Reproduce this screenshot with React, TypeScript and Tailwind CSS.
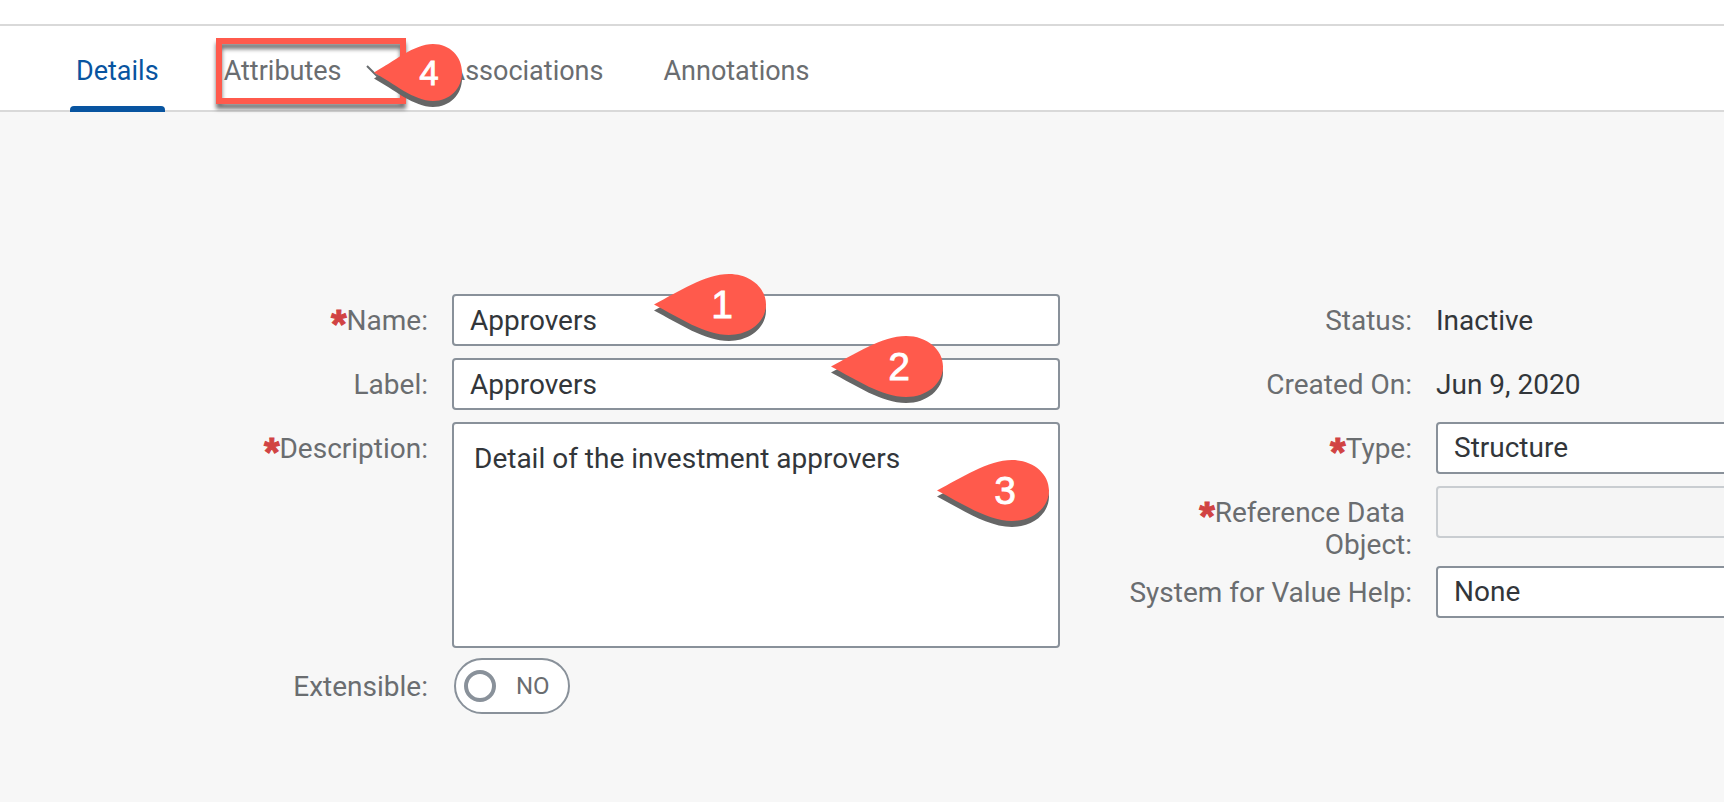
import type { ReactNode } from 'react';

const fieldClass =
  'block h-[52px] w-full appearance-none rounded-[4px] border-2 border-[#89919a] bg-white px-4 text-[28px] leading-8 text-[#32363a] outline-none';

function Pin({ n, place, small = false }: { n: number; place: string; small?: boolean }) {
  const drop = small
    ? 'M0 28.5C20 17.5 40 0 59 0C76 0 88 12.5 88 28.5C88 44.5 76 57 59 57C40 57 20 39.5 0 28.5Z'
    : 'M0 30.5C25 17.5 51 0 75 0C96 0 112 13.5 112 30.5C112 47.5 96 61 75 61C51 61 25 43.5 0 30.5Z';
  return (
    <svg
      className={`pointer-events-none absolute z-10 ${place}`}
      width={small ? 90 : 112}
      height={small ? 64 : 68}
      role="img"
      aria-label={`Step ${n}`}
    >
      <path d={drop} transform="translate(0 6)" fill="#666666" />
      <path d={drop} fill="#ff5a4c" />
      <text
        x={small ? 55 : 68}
        y={small ? 41 : 44}
        textAnchor="middle"
        fill="#ffffff"
        stroke="#ffffff"
        strokeWidth="0.8"
        fontFamily="'Liberation Sans', sans-serif"
        fontSize={small ? 35 : 39}
      >
        {n}
      </text>
    </svg>
  );
}

function Label({ htmlFor, required, children }: { htmlFor: string; required?: boolean; children: ReactNode }) {
  return (
    <label htmlFor={htmlFor} className="pt-[11px] pr-6 pb-[5px] text-right text-[#6a6d70]">
      {required && (
        <span className="inline-block h-8 align-top font-['Liberation_Sans'] text-[40px] leading-[38px] font-bold text-[#d14343] [-webkit-text-stroke:1px_#d14343]">*</span>
      )}
      {children}
    </label>
  );
}

export default function App() {
  return (
    <div className="min-h-screen overflow-hidden bg-[#f7f7f7] font-[Roboto,sans-serif] text-[28px] leading-8 text-[#32363a]">
      <header className="bg-white pt-6">
        <nav className="flex h-22 items-stretch border-y-2 border-[#d9d9d9] pl-[70px] text-[27px] text-[#6a6d70]">
          <a href="#details" aria-current="page" className="relative flex items-center px-1.5 pt-1.5 text-[#0854a0]">
            Details
            <span className="absolute inset-x-0 -bottom-0.5 h-1.5 rounded-t-[4px] bg-[#0854a0]" />
          </a>
          <div className="relative ml-[59px] flex items-center gap-6 pt-1.5">
            <a href="#attributes">Attributes</a>
            <button type="button" aria-label="Attributes menu" className="flex">
              <svg width="22" height="12" viewBox="0 0 22 12" fill="none" stroke="#6a6d70" strokeWidth="2">
                <path d="M1 1L11 11L21 1" />
              </svg>
            </button>
            <span className="pointer-events-none absolute top-3 -left-2 h-[66px] w-[190px] border-6 border-[#ff5a4c] drop-shadow-[0_5px_2px_rgba(0,0,0,0.55)]" />
            <Pin n={4} small place="top-[18px] left-[150px]" />
          </div>
          <a href="#associations" className="ml-15 flex items-center pt-1.5">Associations</a>
          <a href="#annotations" className="ml-15 flex items-center pt-1.5">Annotations</a>
        </nav>
      </header>

      <main className="grid grid-cols-[minmax(0,1060fr)_minmax(0,664fr)] items-start pt-[182px]">
        <section className="grid grid-cols-[minmax(0,452fr)_minmax(0,608fr)]">
          <Label htmlFor="name" required>Name:</Label>
          <div className="relative pb-3">
            <input id="name" defaultValue="Approvers" className={fieldClass} />
            <Pin n={1} place="-top-5 left-[202px]" />
          </div>
          <Label htmlFor="label">Label:</Label>
          <div className="relative pb-3">
            <input id="label" defaultValue="Approvers" className={fieldClass} />
            <Pin n={2} place="-top-[22px] left-[379px]" />
          </div>
          <Label htmlFor="description" required>Description:</Label>
          <div className="relative pb-[10px]">
            <textarea
              id="description"
              defaultValue="Detail of the investment approvers"
              className="block h-[226px] w-full resize-none rounded-[4px] border-2 border-[#89919a] bg-white px-5 py-[19px] text-[28px] leading-8 outline-none"
            />
            <Pin n={3} place="top-[38px] left-[485px]" />
          </div>
          <div className="flex items-center justify-end pb-1">
            <Label htmlFor="extensible">Extensible:</Label>
          </div>
          <div className="pl-0.5">
            <button
              id="extensible"
              type="button"
              role="switch"
              aria-checked="false"
              className="flex h-14 w-[116px] items-center gap-5 rounded-full border-2 border-[#89919a] bg-white pl-2 text-[24px] text-[#6a6d70]"
            >
              <span className="size-8 rounded-full border-4 border-[#89919a]" />
              NO
            </button>
          </div>
        </section>

        <section className="grid grid-cols-[minmax(0,376fr)_minmax(0,288fr)]">
          <span className="pt-[11px] pr-6 pb-[21px] text-right text-[#6a6d70]">Status:</span>
          <span className="pt-[11px]">Inactive</span>
          <span className="pt-[11px] pr-6 pb-[21px] text-right text-[#6a6d70]">Created On:</span>
          <span className="pt-[11px]">Jun 9, 2020</span>
          <Label htmlFor="type" required>Type:</Label>
          <div className="pb-3">
            <select id="type" className={`${fieldClass} min-w-[120%]`}>
              <option>Structure</option>
            </select>
          </div>
          <Label htmlFor="reference" required>
            Reference Data&nbsp;<br />Object:
          </Label>
          <div className="pb-3">
            <input
              id="reference"
              disabled
              className="block h-[52px] min-w-[120%] rounded-[4px] border-2 border-[#c9cdd1] bg-[#f5f5f5] px-4"
            />
          </div>
          <Label htmlFor="system">System for Value Help:</Label>
          <div className="pb-3">
            <select id="system" className={`${fieldClass} min-w-[120%]`}>
              <option>None</option>
            </select>
          </div>
        </section>
      </main>
    </div>
  );
}
